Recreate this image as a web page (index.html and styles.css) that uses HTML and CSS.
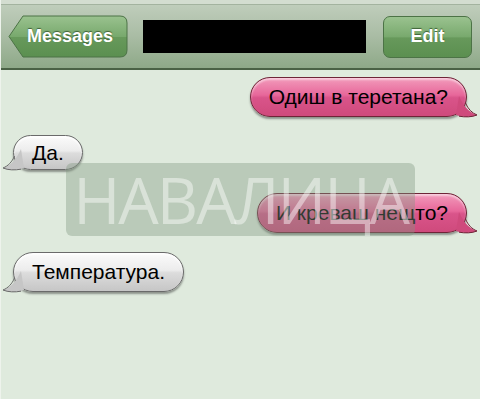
FILE: index.html
```html
<!DOCTYPE html>
<html>
<head>
  <link rel="stylesheet" href="styles.css">
</head>
<body>
  <div class="top-strip"></div>
  <div class="navbar">
    <div class="back-btn">
      <svg class="btn-shape" width="120" height="43" viewBox="0 0 120 43">
        <defs>
          <linearGradient id="btnGrad" x1="0" y1="0" x2="0" y2="1">
            <stop offset="0" stop-color="#9ac28f"/>
            <stop offset="0.5" stop-color="#78a96d"/>
            <stop offset="0.52" stop-color="#67995b"/>
            <stop offset="1" stop-color="#5b8f50"/>
          </linearGradient>
        </defs>
        <path d="M1 21.5 L15 1 H112 Q119 1 119 8 V35 Q119 42 112 42 H15 Z" fill="url(#btnGrad)" stroke="#4c7346" stroke-width="1"/>
      </svg>
      <span class="btn-label">Messages</span>
    </div>
    <div class="title-box"></div>
    <div class="edit-btn"><span class="btn-label">Edit</span></div>
  </div>

  <div class="thread">
    <div class="row row-out first">
      <div class="bubble out">
        Одиш в теретана?
        <svg class="tail tail-out" width="24" height="24" viewBox="0 0 24 24">
          <path d="M5 2 C9 11 14 18 23 21 C17 23.5 9 23.5 2 21 Z" fill="#cf4a7c"/>
          <path d="M11.5 9 C14 15 18 19 23 21 C18 23.2 11 23.3 5 22.2" fill="none" stroke="#6e2437" stroke-width="1"/>
        </svg>
      </div>
    </div>
    <div class="row row-in short">
      <div class="bubble in">
        Да.
        <svg class="tail tail-in" width="24" height="24" viewBox="0 0 24 24">
          <path d="M19 2 C15 11 10 18 1 21 C7 23.5 15 23.5 22 21 Z" fill="#c6c6c6"/>
          <path d="M12.5 9 C10 15 6 19 1 21 C6 23.2 13 23.3 19 22.2" fill="none" stroke="#6a6a6a" stroke-width="1"/>
        </svg>
      </div>
    </div>
    <div class="row row-out after-short">
      <div class="bubble out">
        И креваш нещто?
        <svg class="tail tail-out" width="24" height="24" viewBox="0 0 24 24">
          <path d="M5 2 C9 11 14 18 23 21 C17 23.5 9 23.5 2 21 Z" fill="#cf4a7c"/>
          <path d="M11.5 9 C14 15 18 19 23 21 C18 23.2 11 23.3 5 22.2" fill="none" stroke="#6e2437" stroke-width="1"/>
        </svg>
      </div>
    </div>
    <div class="row row-in">
      <div class="bubble in">
        Температура.
        <svg class="tail tail-in" width="24" height="24" viewBox="0 0 24 24">
          <path d="M19 2 C15 11 10 18 1 21 C7 23.5 15 23.5 22 21 Z" fill="#c6c6c6"/>
          <path d="M12.5 9 C10 15 6 19 1 21 C6 23.2 13 23.3 19 22.2" fill="none" stroke="#6a6a6a" stroke-width="1"/>
        </svg>
      </div>
    </div>

    <div class="watermark">НАВАЛИЦА</div>
  </div>
</body>
</html>
```

FILE: styles.css
```css
html, body {
  margin: 0;
  padding: 0;
}
body {
  width: 480px;
  height: 399px;
  overflow: hidden;
  background: #dfeadd;
  font-family: 'Liberation Sans', Arial, sans-serif;
  border-left: 1px solid #eef3ec;
  box-sizing: border-box;
}
.top-strip {
  height: 4px;
  background: #d3ddd0;
  border-bottom: 1px solid #a3b39f;
}
.navbar {
  height: 63px;
  display: flex;
  align-items: center;
  padding: 0 8px 0 7px;
  background: linear-gradient(#bfcdbb, #a9bca4 50%, #8ea988);
  border-bottom: 2px solid #4a6245;
}
.back-btn {
  position: relative;
  width: 120px;
  height: 43px;
  display: flex;
  align-items: center;
  padding-left: 19px;
  box-sizing: border-box;
}
.btn-shape {
  position: absolute;
  left: 0;
  top: 0;
}
.btn-label {
  position: relative;
  color: #fff;
  font-weight: bold;
  font-size: 18px;
  text-shadow: 0 -1px 1px #3f6238;
}
.title-box {
  width: 223px;
  height: 33px;
  margin-left: 15px;
  background: #000;
}
.edit-btn {
  margin-left: auto;
  width: 89px;
  height: 42px;
  box-sizing: border-box;
  display: flex;
  align-items: center;
  justify-content: center;
  border: 1px solid #4c7346;
  border-radius: 7px;
  background: linear-gradient(#9ac28f, #78a96d 50%, #67995b 52%, #5b8f50);
}
.thread {
  position: relative;
  display: flex;
  flex-direction: column;
  padding: 0 13px 0 12px;
}
.row {
  display: flex;
  margin-top: 19px;
}
.row.first {
  margin-top: 7px;
}
.row.after-short {
  margin-top: 23px;
}
.row-out {
  justify-content: flex-end;
}
.bubble {
  position: relative;
  height: 40px;
  box-sizing: border-box;
  display: flex;
  align-items: center;
  padding: 0 18px;
  border-radius: 20px;
  font-size: 21px;
  color: #000;
}
.bubble.out {
  border: 1px solid #6e2437;
  background: linear-gradient(#f29bbb, #e7679a 45%, #d9548a 52%, #cf4a7c);
  box-shadow: 0 2px 2px rgba(40, 40, 40, 0.45), inset 0 2px 2px rgba(255, 255, 255, 0.5);
}
.bubble.in {
  border: 1px solid #6a6a6a;
  background: linear-gradient(#fbfbfb, #ececec 45%, #dcdcdc 52%, #c6c6c6);
  box-shadow: 0 2px 2px rgba(40, 40, 40, 0.45), inset 0 2px 2px rgba(255, 255, 255, 0.8);
}
.row-in.short .bubble {
  height: 35px;
}
.row-in.short {
  margin-top: 18px;
}
.tail {
  position: absolute;
  bottom: -2px;
}
.tail-out {
  right: -12px;
}
.tail-in {
  left: -12px;
}
.watermark {
  position: absolute;
  left: 65px;
  top: 93px;
  width: 349px;
  height: 73px;
  border-radius: 6px;
  background: rgba(128, 151, 129, 0.39);
  color: rgba(255, 255, 255, 0.45);
  font-family: 'Open Sans', 'DejaVu Sans', sans-serif;
  font-size: 64px;
  line-height: 73px;
  text-align: center;
  letter-spacing: -2px;
}
```
